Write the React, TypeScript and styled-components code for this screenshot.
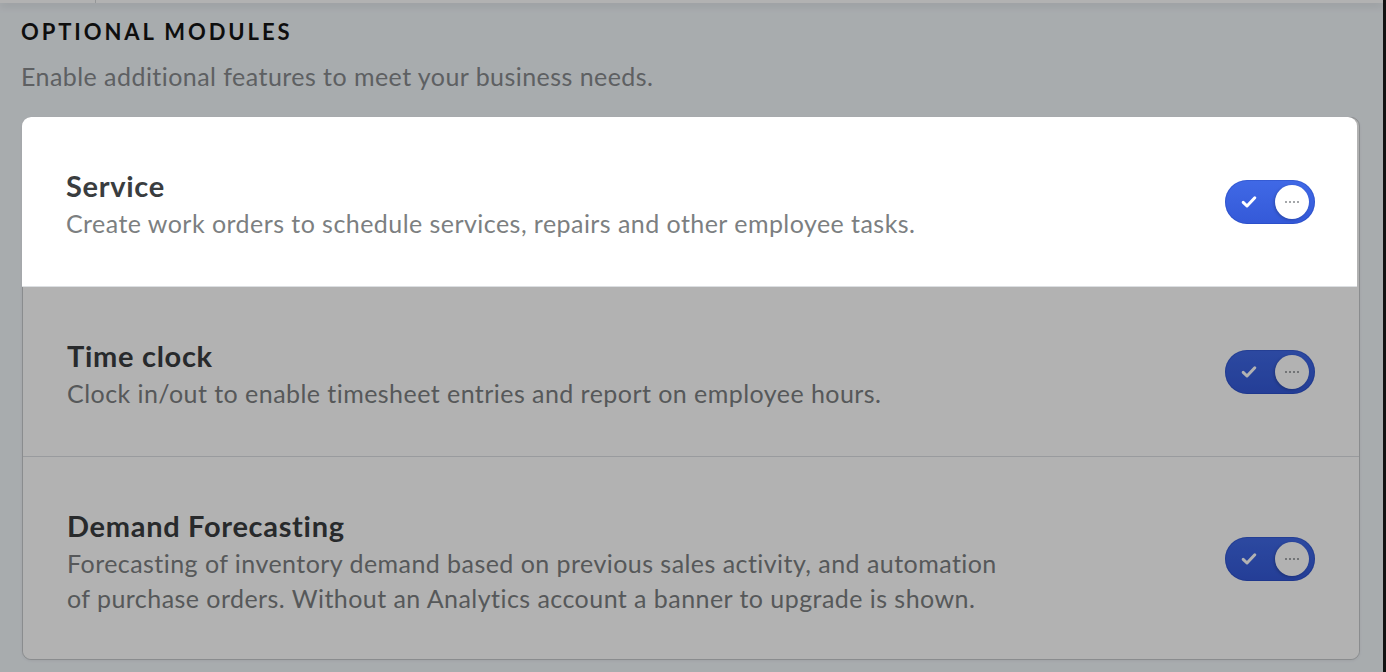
import React from 'react';
import styled, { createGlobalStyle } from 'styled-components';

const GlobalStyle = createGlobalStyle`
  html, body {
    margin: 0;
    padding: 0;
    background: #f1f6fa;
    font-family: Lato, "Open Sans", "Liberation Sans", sans-serif;
  }
  * { box-sizing: border-box; }
`;

const Frame = styled.div`
  display: flex;
  min-height: 672px;
`;

const Main = styled.div`
  flex: 1;
  display: flex;
  flex-direction: column;
`;

const EdgeStrip = styled.div`
  width: 3px;
  background: #1a1a1a;
`;

const TopBar = styled.div`
  height: 3px;
  display: flex;
  background: #ffffff;
  box-shadow: 0 2px 8px rgba(0, 0, 0, 0.18);
`;

const TopBarCell = styled.div`
  width: 96px;
  border-right: 1px solid #d6d8da;
`;

const Section = styled.section`
  padding: 15px 23px 0 22px;
`;

const Heading = styled.h2`
  margin: 0 0 0 -1px;
  font-size: 22px;
  line-height: 28px;
  font-weight: 700;
  letter-spacing: 2.9px;
  color: #151515;
  text-transform: uppercase;
`;

const Subtitle = styled.p`
  margin: 15px 0 26px -1px;
  font-size: 25px;
  line-height: 30px;
  letter-spacing: 0.45px;
  color: #878a8d;
`;

const Card = styled.div`
  border: 1px solid #c6c9cc;
  border-radius: 9px;
  background: #ffffff;
  box-shadow: 0 1px 3px rgba(0, 0, 0, 0.06);
`;

const Row = styled.div<{ $highlighted?: boolean; $last?: boolean }>`
  display: flex;
  align-items: center;
  justify-content: space-between;
  gap: 40px;
  padding: 49px ${({ $highlighted }) => ($highlighted ? '42px' : '44px')}
    ${({ $last }) => ($last ? '43px' : '45px')} 44px;
  background: #ffffff;
  border-bottom: ${({ $last }) => ($last ? 'none' : '1px solid #dcdfe2')};
  border-radius: ${({ $highlighted, $last }) =>
    $highlighted ? '9px 9px 0 0' : $last ? '0 0 9px 9px' : '0'};
  ${({ $highlighted }) =>
    $highlighted &&
    `
    position: relative;
    z-index: 20;
    margin: -1px 2px 0 -1px;
  `}
`;

const RowText = styled.div`
  display: flex;
  flex-direction: column;
`;

const RowTitle = styled.h3`
  margin: 0;
  font-size: 29px;
  line-height: 40px;
  font-weight: 700;
  letter-spacing: 0.7px;
  color: #3a3d3f;
`;

const RowDescription = styled.p`
  margin: 0;
  max-width: 942px;
  font-size: 25px;
  line-height: 35px;
  letter-spacing: 0.45px;
  color: #7c7f81;
`;

const ToggleTrack = styled.button<{ $on: boolean }>`
  flex: none;
  position: relative;
  width: 90px;
  height: 44px;
  margin-top: -4px;
  padding: 0;
  border: none;
  border-radius: 22px;
  cursor: pointer;
  background: ${({ $on }) =>
    $on ? 'linear-gradient(180deg, #4069e6 0%, #3459d8 100%)' : '#c9ccd0'};
  box-shadow: inset 0 0 0 1px rgba(20, 50, 160, 0.25);
  display: flex;
  align-items: center;
`;

const CheckMark = styled.svg`
  position: absolute;
  left: 16px;
  top: 15px;
`;

const Knob = styled.span<{ $on: boolean }>`
  position: absolute;
  top: 5px;
  left: ${({ $on }) => ($on ? '50px' : '5px')};
  width: 34px;
  height: 34px;
  border-radius: 50%;
  background: #ffffff;
  box-shadow: -1px 1px 3px rgba(0, 0, 0, 0.22);
  display: flex;
  align-items: center;
  justify-content: center;
  gap: 2px;
`;

const KnobDot = styled.span`
  width: 2px;
  height: 2px;
  background: #a4a7aa;
`;

const Backdrop = styled.div`
  position: fixed;
  inset: 0;
  background: rgba(0, 0, 0, 0.3);
  z-index: 10;
`;

type Module = {
  title: string;
  description: string;
  enabled: boolean;
};

const modules: Module[] = [
  {
    title: 'Service',
    description: 'Create work orders to schedule services, repairs and other employee tasks.',
    enabled: true,
  },
  {
    title: 'Time clock',
    description: 'Clock in/out to enable timesheet entries and report on employee hours.',
    enabled: true,
  },
  {
    title: 'Demand Forecasting',
    description:
      'Forecasting of inventory demand based on previous sales activity, and automation of purchase orders. Without an Analytics account a banner to upgrade is shown.',
    enabled: true,
  },
];

const Toggle: React.FC<{ on: boolean }> = ({ on }) => (
  <ToggleTrack $on={on} aria-pressed={on}>
    {on && (
      <CheckMark width="16" height="14" viewBox="0 0 16 14">
        <path
          d="M2.2 7.4 L6 11 L13.8 2.8"
          fill="none"
          stroke="#ffffff"
          strokeWidth="3"
          strokeLinecap="round"
          strokeLinejoin="round"
        />
      </CheckMark>
    )}
    <Knob $on={on}>
      <KnobDot />
      <KnobDot />
      <KnobDot />
      <KnobDot />
    </Knob>
  </ToggleTrack>
);

export default function App() {
  return (
    <>
      <GlobalStyle />
      <Frame>
        <Main>
          <TopBar>
            <TopBarCell />
          </TopBar>
          <Section>
            <Heading>Optional Modules</Heading>
            <Subtitle>Enable additional features to meet your business needs.</Subtitle>
            <Card>
              {modules.map((m, i) => (
                <Row key={m.title} $highlighted={i === 0} $last={i === modules.length - 1}>
                  <RowText>
                    <RowTitle>{m.title}</RowTitle>
                    <RowDescription>{m.description}</RowDescription>
                  </RowText>
                  <Toggle on={m.enabled} />
                </Row>
              ))}
            </Card>
          </Section>
        </Main>
        <EdgeStrip />
      </Frame>
      <Backdrop />
    </>
  );
}
